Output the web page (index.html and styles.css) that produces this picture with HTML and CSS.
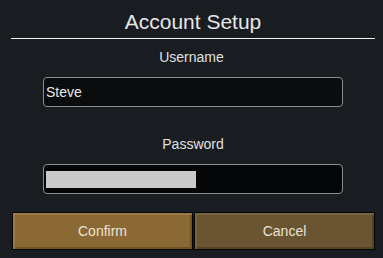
FILE: index.html
```html
<!DOCTYPE html>
<html lang="en">
  <head>
    <meta charset="UTF-8" />
    <meta name="viewport" content="width=device-width, initial-scale=1.0" />
    <title>Account Setup</title>
    <link rel="stylesheet" href="styles.css">
  </head>
  <body>
    <main class="setup">
      <h1 class="titulo">Account Setup</h1>
      <form class="formulario">
        <label for="usuario" class="etiqueta">Username</label>
        <div class="campo">Steve</div>
        <label for="clave" class="etiqueta etiqueta-clave">Password</label>
        <div class="campo campo-clave"><span class="barra"></span></div>
        <div class="botones">
          <button type="button" class="boton confirmar">Confirm</button>
          <button type="button" class="boton cancelar">Cancel</button>
        </div>
      </form>
    </main>
  </body>
</html>
```

FILE: styles.css
```css
* {
    margin: 0;
    padding: 0;
    box-sizing: border-box;
}
body {
    font-family: "Liberation Sans", Arial, sans-serif;
    background-color: #191c20;
    color: #e6e6e6;
    width: 383px;
    height: 258px;
    overflow: hidden;
}
.setup {
    padding: 0 8px 0 11px;
}
.titulo {
    font-weight: normal;
    font-size: 21px;
    text-align: center;
    height: 39px;
    line-height: 30px;
    padding-top: 7px;
    border-bottom: 1px solid #f2f2f2;
    width: 364px;
}
.formulario {
    display: flex;
    flex-direction: column;
    align-items: center;
}
.etiqueta {
    font-size: 14px;
    margin-top: 10px;
    height: 16px;
    line-height: 16px;
    margin-left: -3px;
    color: #e0e0e0;
}
.etiqueta-clave {
    margin-top: 29px;
    margin-left: 0;
}
.campo {
    width: 300px;
    height: 30px;
    margin-top: 12px;
    border: 1px solid #8a8d91;
    border-radius: 4px;
    background-color: #0b0c0e;
    font-size: 14px;
    line-height: 28px;
    padding-left: 2px;
    color: #e8e8e8;
    align-self: flex-start;
    margin-left: 32px;
}
.campo-clave {
    background-color: #050607;
    padding: 6px 2px;
}
.barra {
    display: block;
    width: 150px;
    height: 17px;
    background-color: #cacaca;
}
.botones {
    display: flex;
    gap: 1px;
    margin-top: 18px;
    margin-left: 1px;
    align-self: flex-start;
}
.boton {
    width: 181px;
    height: 38px;
    border: 1px solid #050505;
    font-family: inherit;
    font-size: 14px;
    color: #ebe3d6;
}
.confirmar {
    background-color: #8b6935;
    box-shadow: inset 2px 2px 0 #9c7a43, inset -2px -2px 0 #6f5128;
}
.cancelar {
    background-color: #6a5431;
    box-shadow: inset 2px 2px 0 #7a6440, inset -2px -2px 0 #544224;
}
```
